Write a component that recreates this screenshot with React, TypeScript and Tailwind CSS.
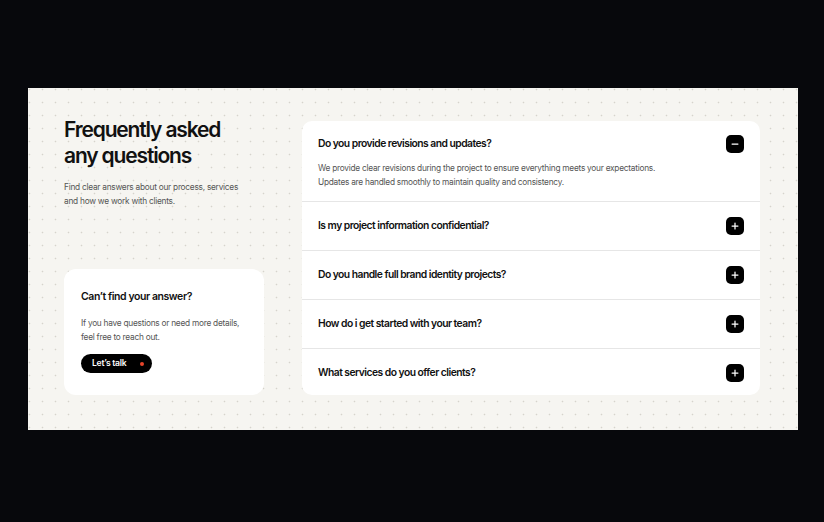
import { Minus, Plus } from "lucide-react"

// FAQ 区块 — 左侧标题 + 联系卡片，右侧折叠问答列表

const faqs = [
  { q: "Do you provide revisions and updates?", open: true },
  { q: "Is my project information confidential?" },
  { q: "Do you handle full brand identity projects?" },
  { q: "How do i get started with your team?" },
  { q: "What services do you offer clients?" },
]

function Toggle({ open }: { open?: boolean }) {
  return (
    <span className="size-[18px] shrink-0 rounded-[5px] bg-black text-white flex items-center justify-center">
      {open ? <Minus className="size-[10px]" strokeWidth={3} /> : <Plus className="size-[10px]" strokeWidth={3} />}
    </span>
  )
}

export default function App() {
  return (
    <div className="w-[824px] h-[522px] bg-[#07080c] pt-[88px] pl-[28px] font-['Inter','Liberation_Sans',sans-serif]">
      <div className="w-[770px] h-[342px] bg-[#f6f5f1] bg-[radial-gradient(circle,#d6d3cc_0.7px,transparent_1.1px)] bg-size-[13px_13px] bg-position-[-5px_-5px] flex pt-[33px] pl-[36px] gap-[38px]">
        {/* 左侧 */}
        <div className="w-[200px] h-[274px] flex flex-col justify-between">
          <div>
            <h1 className="-mt-[4px] text-[21px] leading-[26px] font-semibold tracking-[-0.055em] text-[#111] whitespace-nowrap">
              Frequently asked
              <br />
              any questions
            </h1>
            <p className="mt-[12px] text-[8.3px] leading-[13.5px] text-[#555] tracking-[-0.03em] whitespace-nowrap">
              Find clear answers about our process, services
              <br />
              and how we work with clients.
            </p>
          </div>

          <div className="h-[126px] rounded-[12px] bg-white px-[17px] pt-[21px]">
            <h3 className="text-[10.5px] leading-[14px] font-semibold tracking-[-0.04em] text-[#111] whitespace-nowrap">
              Can’t find your answer?
            </h3>
            <p className="mt-[12px] text-[8.3px] leading-[14px] text-[#555] tracking-[-0.03em] whitespace-nowrap">
              If you have questions or need more details,
              <br />
              feel free to reach out.
            </p>
            <button className="mt-[10px] h-[19px] w-[71px] rounded-full bg-black text-white flex items-center justify-between pl-[11px] pr-[8px]">
              <span className="text-[8.6px] font-semibold tracking-[-0.03em]">Let’s talk</span>
              <span className="size-[4px] rounded-full bg-[#e8442a]" />
            </button>
          </div>
        </div>

        {/* 右侧问答 */}
        <div className="w-[458px] h-[274px] rounded-[10px] bg-white overflow-hidden flex flex-col">
          {faqs.map((f, i) => (
            <div key={i} className={`px-[16px] ${i > 0 ? "border-t border-[#e6e6e6]" : ""}`}>
              <div className={`flex items-center justify-between ${f.open ? "pt-[14px] h-[32px]" : "h-[48px]"}`}>
                <span className="text-[10.3px] font-semibold tracking-[-0.05em] text-[#111] whitespace-nowrap">{f.q}</span>
                <Toggle open={f.open} />
              </div>
              {f.open && (
                <p className="pt-[8px] pb-[12px] text-[8.3px] leading-[14px] text-[#555] tracking-[-0.03em] whitespace-nowrap">
                  We provide clear revisions during the project to ensure everything meets your expectations.
                  <br />
                  Updates are handled smoothly to maintain quality and consistency.
                </p>
              )}
            </div>
          ))}
        </div>
      </div>
    </div>
  )
}
